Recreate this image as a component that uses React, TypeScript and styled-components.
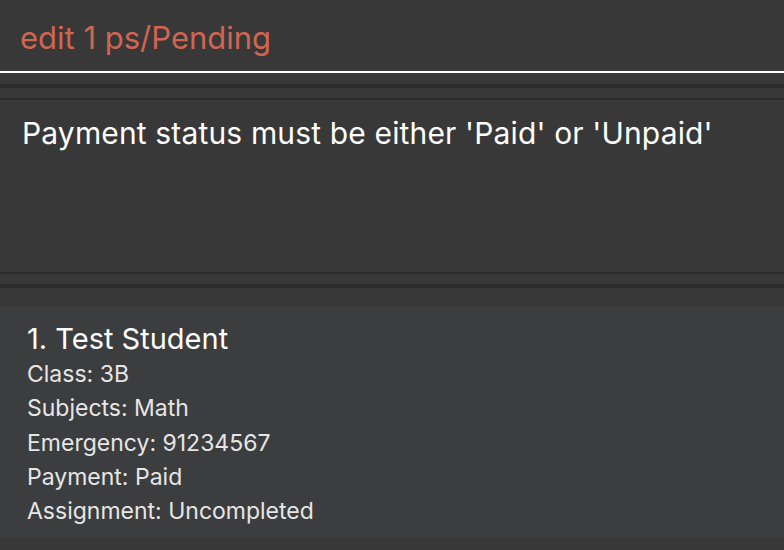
import React from "react";
import styled, { createGlobalStyle } from "styled-components";

const GlobalStyle = createGlobalStyle`
    html, body {
        margin: 0;
        padding: 0;
        background: #383838;
    }
    body {
        font-family: Inter, "Liberation Sans", sans-serif;
    }
`

const Page = styled.div`
    width: 784px;
    height: 550px;
    background: #383838;
    display: flex;
    flex-direction: column;
    overflow: hidden;
`

const CommandBox = styled.div<{ $error?: boolean }>`
    height: 73px;
    box-sizing: border-box;
    border-bottom: 2px solid #ffffff;
    padding: 3px 0 0 20px;
    display: flex;
    align-items: center;
    font-size: 31px;
    color: ${p => (p.$error ? "#d06651" : "#ffffff")};
`

const Divider = styled.div<{ $above: number; $below: number }>`
    height: 4px;
    background: #2b2b2b;
    margin-top: ${p => p.$above}px;
    margin-bottom: ${p => p.$below}px;
`

const ResultDisplay = styled.div`
    height: 176px;
    box-sizing: border-box;
    border-top: 2px solid #2b2b2b;
    border-bottom: 2px solid #2b2b2b;
    padding: 15px 22px 0;
    font-size: 30px;
    letter-spacing: 0.15px;
    color: #ffffff;
`

const Card = styled.div`
    height: 231px;
    box-sizing: border-box;
    background: #3c3d3f;
    padding: 14px 27px 0;
    display: flex;
    flex-direction: column;
`

const Name = styled.div`
    font-size: 29px;
    line-height: 36px;
    color: #ffffff;
`

const Field = styled.div`
    font-size: 23px;
    line-height: 34.3px;
    color: #e6e6e6;
`

interface IStudent {
    name: string
    className: string
    subjects: string
    emergency: string
    payment: string
    assignment: string
}

const student: IStudent = {
    name: "Test Student",
    className: "3B",
    subjects: "Math",
    emergency: "91234567",
    payment: "Paid",
    assignment: "Uncompleted",
}

function StudentCard(props: { index: number, student: IStudent }) {
    const { index, student } = props
    return (
        <Card>
            <Name>{index}. {student.name}</Name>
            <Field>Class: {student.className}</Field>
            <Field>Subjects: {student.subjects}</Field>
            <Field>Emergency: {student.emergency}</Field>
            <Field>Payment: {student.payment}</Field>
            <Field>Assignment: {student.assignment}</Field>
        </Card>
    )
}

export default function App() {
    return (
        <>
            <GlobalStyle />
            <Page>
                <CommandBox $error>edit 1 ps/Pending</CommandBox>
                <Divider $above={11} $below={10} />
                <ResultDisplay>Payment status must be either 'Paid' or 'Unpaid'</ResultDisplay>
                <Divider $above={10} $below={19} />
                <StudentCard index={1} student={student} />
            </Page>
        </>
    )
}
